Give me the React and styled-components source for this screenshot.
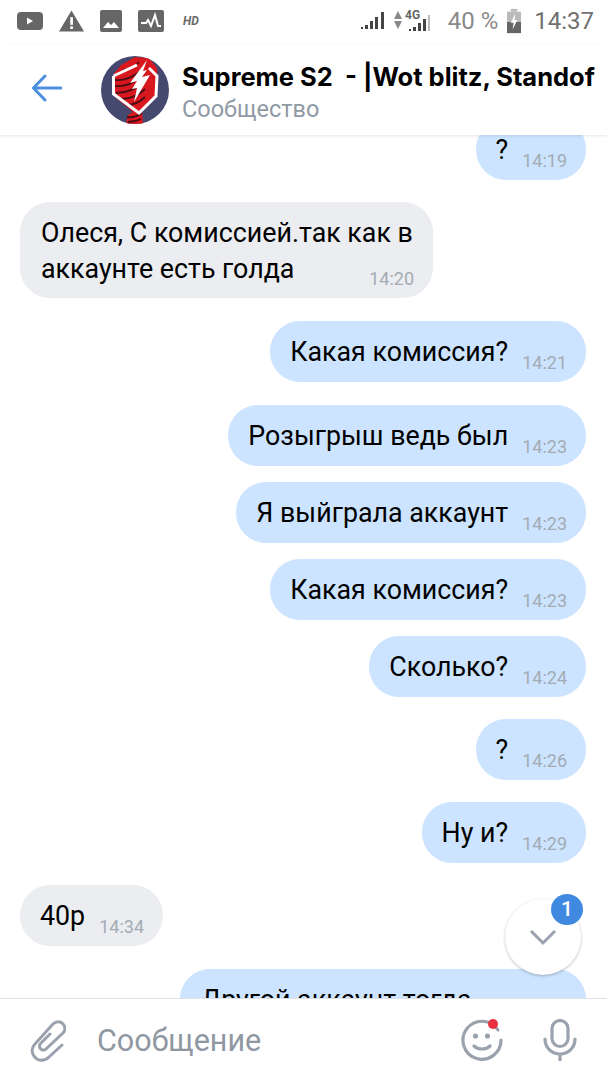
import React from "react";
import styled, { createGlobalStyle } from "styled-components";

const Global = createGlobalStyle`
  html, body { margin: 0; padding: 0; background: #fff; }
  * { box-sizing: border-box; }
`;

const Phone = styled.div`
  width: 607px;
  height: 1080px;
  display: flex;
  flex-direction: column;
  overflow: hidden;
  background: #fff;
  font-family: Roboto, "Noto Sans", sans-serif;
`;

const StatusBar = styled.div`
  height: 44px;
  flex: none;
  display: flex;
  align-items: center;
  padding: 0 13px 3px 17px;
`;

const StatusIcons = styled.div`
  display: flex;
  align-items: center;
  gap: 16px;
`;

const HdMark = styled.span`
  font: italic 700 12px Roboto, sans-serif;
  color: #6a6a6a;
  margin-left: 3px;
`;

const StatusRight = styled.div`
  margin-left: auto;
  display: flex;
  align-items: center;
`;

const Percent = styled.span`
  font-size: 24px;
  color: #8a8a8a;
  margin: 0 9px 0 15px;
`;

const Clock = styled.span`
  font-size: 24px;
  color: #707070;
  margin-left: 13px;
`;

const Header = styled.div`
  height: 91px;
  flex: none;
  display: flex;
  align-items: center;
  padding: 0 0 0 32px;
  background: #fff;
  box-shadow: 0 1px 3px rgba(0, 0, 0, 0.1);
  position: relative;
  z-index: 2;
  overflow: hidden;
`;

const BackButton = styled.div`
  width: 69px;
  flex: none;
  display: flex;
  align-items: center;
  margin-top: -3px;
`;

const Avatar = styled.svg`
  width: 68px;
  height: 68px;
  flex: none;
`;

const HeaderText = styled.div`
  margin: 6px 0 0 13px;
  white-space: nowrap;
`;

const Title = styled.div`
  font: 700 25.5px/32px Inter, sans-serif;
  color: #000;
`;

const Subtitle = styled.div`
  font-size: 23.5px;
  line-height: 32px;
  color: #909aa5;
`;

const Feed = styled.div`
  flex: 1;
  min-height: 0;
  overflow: hidden;
  display: flex;
  flex-direction: column;
  padding: 0 21px 0 20px;
`;

const Bubble = styled.div`
  align-self: ${(p) => (p.$mine ? "flex-end" : "flex-start")};
  flex: none;
  height: 61px;
  background: ${(p) => (p.$mine ? "#cce4ff" : "#ebedf0")};
  border-radius: 30px;
  padding: 14px 19px 0 20px;
  margin-top: ${(p) => p.$top}px;
  font-size: 26.8px;
  line-height: 34px;
  color: #000;
  display: flex;
  align-items: flex-start;
  white-space: nowrap;
`;

const WideBubble = styled(Bubble)`
  display: block;
  width: ${(p) => p.$width}px;
  height: ${(p) => p.$height}px;
  line-height: 36px;
  padding: 13px 19px 0 21px;
`;

const BubbleLine = styled.div`
  display: flex;
  justify-content: space-between;
  height: 36px;
`;

const Time = styled.span`
  font-size: 18px;
  line-height: 20px;
  color: #a3abb4;
  margin: 18px 0 0 14px;
  flex: none;
`;

const ComposeBar = styled.div`
  height: 82px;
  flex: none;
  display: flex;
  align-items: center;
  border-top: 1px solid #dfe1e4;
  padding: 1px 30px 0;
  background: #fff;
  position: relative;
  z-index: 2;
`;

const Placeholder = styled.div`
  font-size: 30.5px;
  color: #8f98a2;
  margin-left: 31px;
  flex: 1;
`;

const ComposeIcon = styled.svg`
  flex: none;
  display: block;
`;

const SmileIcon = styled(ComposeIcon)`
  margin-right: 40px;
`;

const ScrollDown = styled.div`
  position: absolute;
  left: 505px;
  top: 899px;
  width: 76px;
  height: 76px;
  border-radius: 50%;
  background: #fff;
  box-shadow: 0 1px 3px rgba(0, 0, 0, 0.25);
  display: flex;
  align-items: center;
  justify-content: center;
  z-index: 3;
`;

const CountBadge = styled.div`
  position: absolute;
  left: 46px;
  top: -5px;
  width: 32px;
  height: 31px;
  border-radius: 50%;
  background: #3f8ae0;
  color: #fff;
  font-size: 21px;
  font-weight: 500;
  line-height: 31px;
  text-align: center;
`;

const gray = "#666";

function AppIcons() {
  return (
    <StatusIcons>
      <svg width="26" height="20" viewBox="0 0 26 20">
        <rect y="1" width="26" height="18" rx="4" fill={gray} />
        <path d="M10 6.5v7l6-3.5z" fill="#fff" />
      </svg>
      <svg width="25" height="22" viewBox="0 0 26 22">
        <path d="M13 0L26 22H0z" fill={gray} />
        <rect x="11.7" y="7" width="2.8" height="8" fill="#fff" />
        <rect x="11.7" y="16.5" width="2.8" height="2.8" fill="#fff" />
      </svg>
      <svg width="22" height="22" viewBox="0 0 22 22">
        <rect width="22" height="22" rx="2" fill={gray} />
        <path d="M3 18l5-6 3 3 3-3 5 6z" fill="#fff" />
      </svg>
      <svg width="26" height="22" viewBox="0 0 26 22">
        <rect width="26" height="22" rx="2" fill={gray} />
        <path d="M3 13h5l2-3 3 6 4-11 3 11h3" fill="none" stroke="#fff" strokeWidth="2" />
      </svg>
      <HdMark>HD</HdMark>
    </StatusIcons>
  );
}

function Signal() {
  return (
    <svg width="24" height="18" viewBox="0 0 24 18">
      <path d="M0 15h2v2H0zM4 13h3v4H4zM9 9h3v8H9zM14 5h3v12h-3zM20 0h3v17h-3z" fill="#444" />
    </svg>
  );
}

function NetworkSignal() {
  return (
    <svg width="40" height="24" viewBox="0 0 40 24" style={{ marginLeft: 8 }}>
      <path d="M5 2l4 8H1zM1 12h8l-4 8z" fill="#888" />
      <text x="12" y="10" fontSize="12" fontWeight="700" fontFamily="Roboto" fill="#666">4G</text>
      <path d="M16 20h2v2h-2zM20 18h3v4h-3zM25 14h3v8h-3zM30 10h3v12h-3z" fill="#444" />
      <path d="M35 6h2v16h-2z" fill="#bbb" />
    </svg>
  );
}

function Battery() {
  return (
    <svg width="14" height="26" viewBox="0 0 15 26">
      <rect x="4" y="0" width="7" height="3" fill="#bbb" />
      <rect x="0" y="3" width="15" height="11" fill="#bbb" />
      <rect x="0" y="14" width="15" height="12" fill="#666" />
      <path d="M9 5l-5 10h3l-1 7 5-10H8z" fill="#fff" />
    </svg>
  );
}

function CommunityAvatar() {
  return (
    <Avatar viewBox="0 0 68 68">
      <defs>
        <clipPath id="avatarCircle">
          <circle cx="34" cy="34" r="34" />
        </clipPath>
      </defs>
      <circle cx="34" cy="34" r="34" fill="#46496f" />
      <g clipPath="url(#avatarCircle)">
        <path d="M20 9L34 1l14 1 8 10 1 16-4 14-12 13 1 13H25l2-9 5-3-18-15-2-22z" fill="#d8181e" />
        <path d="M14 24c10 1 18-3 26-9M14 30c10 1 20-4 27-10M15 37c10 0 20-4 28-11M19 43c9 0 18-3 25-10M25 49c6 0 13-2 19-8M26 61c6 1 11-1 15-4M27 66c5 0 9-1 13-3M22 14c6 0 12-3 16-8" stroke="#4a0c14" strokeWidth="1.8" fill="none" />
      </g>
      <path d="M12.5 20v18L38 57l17-17 1-20-8-8M12.5 20L36 9" fill="none" stroke="#fff" strokeWidth="3" />
      <path d="M46 4L29 27l7-2-5 8 5-1-3 14 16-27-8 2 5-7-4 1z" fill="#fff" />
    </Avatar>
  );
}

export default function App() {
  return (
    <Phone>
      <Global />
      <StatusBar>
        <AppIcons />
        <StatusRight>
          <Signal />
          <NetworkSignal />
          <Percent>40 %</Percent>
          <Battery />
          <Clock>14:37</Clock>
        </StatusRight>
      </StatusBar>
      <Header>
        <BackButton>
          <svg width="30" height="28" viewBox="0 0 30 28">
            <path d="M29 14H2M13 2L1.5 14 13 26" fill="none" stroke="#4a8fe0" strokeWidth="3" strokeLinecap="round" strokeLinejoin="round" />
          </svg>
        </BackButton>
        <CommunityAvatar />
        <HeaderText>
          <Title>Supreme S2&nbsp; - |Wot blitz, Standof</Title>
          <Subtitle>Сообщество</Subtitle>
        </HeaderText>
      </Header>
      <Feed>
        <Bubble $mine $top={-16}>?<Time>14:19</Time></Bubble>
        <WideBubble $top={22} $width={413} $height={96}>
          <BubbleLine>Олеся, С комиссией.так как в</BubbleLine>
          <BubbleLine>аккаунте есть голда<Time>14:20</Time></BubbleLine>
        </WideBubble>
        <Bubble $mine $top={23}>Какая комиссия?<Time>14:21</Time></Bubble>
        <Bubble $mine $top={23}>Розыгрыш ведь был<Time>14:23</Time></Bubble>
        <Bubble $mine $top={16}>Я выйграла аккаунт<Time>14:23</Time></Bubble>
        <Bubble $mine $top={16}>Какая комиссия?<Time>14:23</Time></Bubble>
        <Bubble $mine $top={16}>Сколько?<Time>14:24</Time></Bubble>
        <Bubble $mine $top={22}>?<Time>14:26</Time></Bubble>
        <Bubble $mine $top={22}>Ну и?<Time>14:29</Time></Bubble>
        <Bubble $top={22}>40р<Time>14:34</Time></Bubble>
        <WideBubble $mine $top={23} $width={406} $height={96}>
          <BubbleLine>Другой аккаунт тогда</BubbleLine>
        </WideBubble>
      </Feed>
      <ComposeBar>
        <ComposeIcon width="36" height="44" viewBox="0 0 36 44">
          <path d="M32 27L19 39C14 44 7 43 4 38 1 34 2 29 5 26L23 6C26 3 31 3 33 6 36 9 35 13 33 15L16 31C14 33 11 32 10 30 9 28 10 26 11 25L20 16" fill="none" stroke="#99a2ad" strokeWidth="3" strokeLinecap="round" />
        </ComposeIcon>
        <Placeholder>Сообщение</Placeholder>
        <SmileIcon width="42" height="42" viewBox="0 0 42 42">
          <path d="M37 11A19 19 0 1 0 40 21" fill="none" stroke="#99a2ad" strokeWidth="3.2" strokeLinecap="round" />
          <circle cx="14.5" cy="17" r="2.6" fill="#99a2ad" />
          <circle cx="26.5" cy="17" r="2.6" fill="#99a2ad" />
          <path d="M13 27c4 4 12 4 16 0" fill="none" stroke="#99a2ad" strokeWidth="3.2" strokeLinecap="round" />
          <circle cx="32" cy="5" r="5" fill="#e8303f" />
        </SmileIcon>
        <ComposeIcon width="34" height="42" viewBox="0 0 34 42">
          <rect x="9" y="1.5" width="16" height="26" rx="8" fill="none" stroke="#99a2ad" strokeWidth="3.2" />
          <path d="M2 20c0 9 7 15 15 15s15-6 15-15M17 35v6" fill="none" stroke="#99a2ad" strokeWidth="3.2" strokeLinecap="round" />
        </ComposeIcon>
      </ComposeBar>
      <ScrollDown>
        <svg width="30" height="18" viewBox="0 0 30 18">
          <path d="M3 3l12 12L27 3" fill="none" stroke="#99a2ad" strokeWidth="3" />
        </svg>
        <CountBadge>1</CountBadge>
      </ScrollDown>
    </Phone>
  );
}
